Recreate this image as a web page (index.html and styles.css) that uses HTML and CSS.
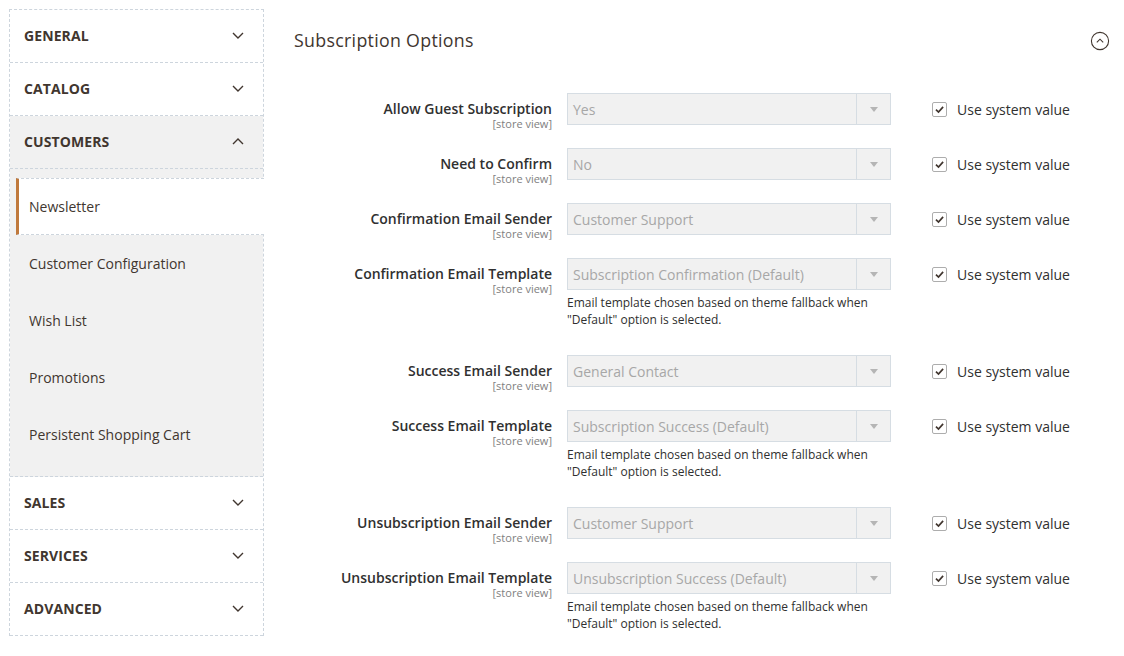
FILE: index.html
```html
<!DOCTYPE html>
<html>
<head>
<meta charset="utf-8">
<link rel="stylesheet" href="styles.css">
</head>
<body>
<div class="page">
  <nav class="nav">
    <div class="nav-title"><span>GENERAL</span><svg class="chev" viewBox="0 0 12 7"><path d="M1 1 L6 6 L11 1"/></svg></div>
    <div class="nav-title"><span>CATALOG</span><svg class="chev" viewBox="0 0 12 7"><path d="M1 1 L6 6 L11 1"/></svg></div>
    <div class="nav-title open"><span>CUSTOMERS</span><svg class="chev" viewBox="0 0 12 7"><path d="M1 6 L6 1 L11 6"/></svg></div>
    <div class="nav-sub">
      <div class="nav-link active">Newsletter</div>
      <div class="nav-link">Customer Configuration</div>
      <div class="nav-link">Wish List</div>
      <div class="nav-link">Promotions</div>
      <div class="nav-link">Persistent Shopping Cart</div>
    </div>
    <div class="nav-title"><span>SALES</span><svg class="chev" viewBox="0 0 12 7"><path d="M1 1 L6 6 L11 1"/></svg></div>
    <div class="nav-title"><span>SERVICES</span><svg class="chev" viewBox="0 0 12 7"><path d="M1 1 L6 6 L11 1"/></svg></div>
    <div class="nav-title last"><span>ADVANCED</span><svg class="chev" viewBox="0 0 12 7"><path d="M1 1 L6 6 L11 1"/></svg></div>
  </nav>
  <main class="main">
    <div class="section-head">
      <h2 class="section-title">Subscription Options</h2>
      <svg class="collapse" viewBox="0 0 20 20"><circle cx="10" cy="10" r="8.6"/><path d="M6.8 11.4 L10 8.2 L13.2 11.4"/></svg>
    </div>
    <div class="form">
      <div class="row">
        <div class="label"><div class="label-text">Allow Guest Subscription</div><div class="scope">[store view]</div></div>
        <div class="control"><div class="select"><span class="val">Yes</span><span class="arrow"></span></div></div>
        <label class="usev"><span class="cb"><svg viewBox="0 0 14 14"><path d="M3.2 7.2 L5.9 9.8 L10.9 4.2"/></svg></span>Use system value</label>
      </div>
      <div class="row">
        <div class="label"><div class="label-text">Need to Confirm</div><div class="scope">[store view]</div></div>
        <div class="control"><div class="select"><span class="val">No</span><span class="arrow"></span></div></div>
        <label class="usev"><span class="cb"><svg viewBox="0 0 14 14"><path d="M3.2 7.2 L5.9 9.8 L10.9 4.2"/></svg></span>Use system value</label>
      </div>
      <div class="row">
        <div class="label"><div class="label-text">Confirmation Email Sender</div><div class="scope">[store view]</div></div>
        <div class="control"><div class="select"><span class="val">Customer Support</span><span class="arrow"></span></div></div>
        <label class="usev"><span class="cb"><svg viewBox="0 0 14 14"><path d="M3.2 7.2 L5.9 9.8 L10.9 4.2"/></svg></span>Use system value</label>
      </div>
      <div class="row">
        <div class="label"><div class="label-text">Confirmation Email Template</div><div class="scope">[store view]</div></div>
        <div class="control"><div class="select"><span class="val">Subscription Confirmation (Default)</span><span class="arrow"></span></div>
          <div class="note">Email template chosen based on theme fallback when "Default" option is selected.</div></div>
        <label class="usev"><span class="cb"><svg viewBox="0 0 14 14"><path d="M3.2 7.2 L5.9 9.8 L10.9 4.2"/></svg></span>Use system value</label>
      </div>
      <div class="row">
        <div class="label"><div class="label-text">Success Email Sender</div><div class="scope">[store view]</div></div>
        <div class="control"><div class="select"><span class="val">General Contact</span><span class="arrow"></span></div></div>
        <label class="usev"><span class="cb"><svg viewBox="0 0 14 14"><path d="M3.2 7.2 L5.9 9.8 L10.9 4.2"/></svg></span>Use system value</label>
      </div>
      <div class="row">
        <div class="label"><div class="label-text">Success Email Template</div><div class="scope">[store view]</div></div>
        <div class="control"><div class="select"><span class="val">Subscription Success (Default)</span><span class="arrow"></span></div>
          <div class="note">Email template chosen based on theme fallback when "Default" option is selected.</div></div>
        <label class="usev"><span class="cb"><svg viewBox="0 0 14 14"><path d="M3.2 7.2 L5.9 9.8 L10.9 4.2"/></svg></span>Use system value</label>
      </div>
      <div class="row">
        <div class="label"><div class="label-text">Unsubscription Email Sender</div><div class="scope">[store view]</div></div>
        <div class="control"><div class="select"><span class="val">Customer Support</span><span class="arrow"></span></div></div>
        <label class="usev"><span class="cb"><svg viewBox="0 0 14 14"><path d="M3.2 7.2 L5.9 9.8 L10.9 4.2"/></svg></span>Use system value</label>
      </div>
      <div class="row">
        <div class="label"><div class="label-text">Unsubscription Email Template</div><div class="scope">[store view]</div></div>
        <div class="control"><div class="select"><span class="val">Unsubscription Success (Default)</span><span class="arrow"></span></div>
          <div class="note">Email template chosen based on theme fallback when "Default" option is selected.</div></div>
        <label class="usev"><span class="cb"><svg viewBox="0 0 14 14"><path d="M3.2 7.2 L5.9 9.8 L10.9 4.2"/></svg></span>Use system value</label>
      </div>
    </div>
  </main>
</div>
</body>
</html>
```

FILE: styles.css
```css
* { box-sizing: border-box; }
html, body { margin: 0; padding: 0; background: #fff; }
body {
  font-family: "Open Sans", "Noto Sans", "Liberation Sans", sans-serif;
  color: #303030;
  font-size: 14px;
}
.page {
  display: flex;
  align-items: flex-start;
  padding: 9px 0 0 9px;
  width: 1124px;
  height: 656px;
  overflow: hidden;
}
.nav {
  width: 255px;
  flex: none;
  border: 1px dashed #cdd5dd;
  border-bottom: none;
}
.nav-title {
  height: 53px;
  display: flex;
  align-items: center;
  justify-content: space-between;
  padding: 0 19px 2px 14px;
  border-bottom: 1px dashed #cdd5dd;
  font-weight: 700;
  font-size: 14px;
  color: #41362f;
  letter-spacing: 0.1px;
}
.nav-title.open { background: #f1f1f1; }
.chev {
  width: 12px;
  height: 7px;
  fill: none;
  stroke: #41362f;
  stroke-width: 1.4;
}
.nav-sub {
  background: #f1f1f1;
  padding: 9px 0 13px 0;
  border-bottom: 1px dashed #cdd5dd;
}
.nav-link {
  margin-left: 6px;
  height: 57px;
  padding: 0 0 0 10px;
  display: flex;
  align-items: center;
  color: #41362f;
  font-size: 14px;
  border-left: 3px solid transparent;
}
.nav-link.active {
  background: #fff;
  border-left-color: #c0793c;
  border-top: 1px dashed #cdd5dd;
  border-bottom: 1px dashed #cdd5dd;
  margin-right: -1px;
}
.main {
  flex: 1;
  padding: 19px 14px 0 30px;
}
.section-head {
  display: flex;
  justify-content: space-between;
  align-items: center;
  height: 24px;
}
.section-title {
  margin: 0;
  font-size: 17.8px;
  font-weight: 400;
  color: #41362f;
  letter-spacing: 0.3px;
}
.collapse {
  width: 20px;
  height: 20px;
  fill: none;
  stroke: #41362f;
  stroke-width: 1.1;
  margin-top: 2px;
}
.form { margin-top: 41px; }
.row {
  display: flex;
  align-items: flex-start;
  margin-bottom: 18px;
}
.label {
  width: 258px;
  text-align: right;
  padding-top: 7px;
}
.label-text {
  font-weight: 600;
  font-size: 14px;
  line-height: 18px;
  color: #303030;
}
.scope {
  font-size: 11px;
  line-height: 12px;
  color: #808080;
}
.control {
  width: 324px;
  margin-left: 15px;
}
.select {
  height: 32px;
  border: 1px solid #d6dde3;
  background: #f1f1f1;
  display: flex;
  align-items: center;
}
.val {
  flex: 1;
  padding-left: 5px;
  color: #a7a7a7;
  font-size: 14px;
  white-space: nowrap;
}
.arrow {
  width: 34px;
  height: 30px;
  border-left: 1px solid #d6dde3;
  display: flex;
  align-items: center;
  justify-content: center;
}
.arrow::before {
  content: "";
  border-left: 4px solid transparent;
  border-right: 4px solid transparent;
  border-top: 5px solid #b5b5b5;
}
.note {
  margin-top: 4px;
  padding-bottom: 9px;
  font-size: 12px;
  line-height: 17px;
  color: #303030;
  padding-right: 14px;
}
.usev {
  display: flex;
  align-items: center;
  margin-left: 41px;
  height: 32px;
  font-size: 14px;
  color: #303030;
}
.cb {
  width: 15px;
  height: 15px;
  border: 1px solid #adadad;
  border-radius: 2px;
  background: #fff;
  margin-right: 10px;
  display: flex;
}
.cb svg {
  width: 13px;
  height: 13px;
  fill: none;
  stroke: #41362f;
  stroke-width: 1.8;
}
```
